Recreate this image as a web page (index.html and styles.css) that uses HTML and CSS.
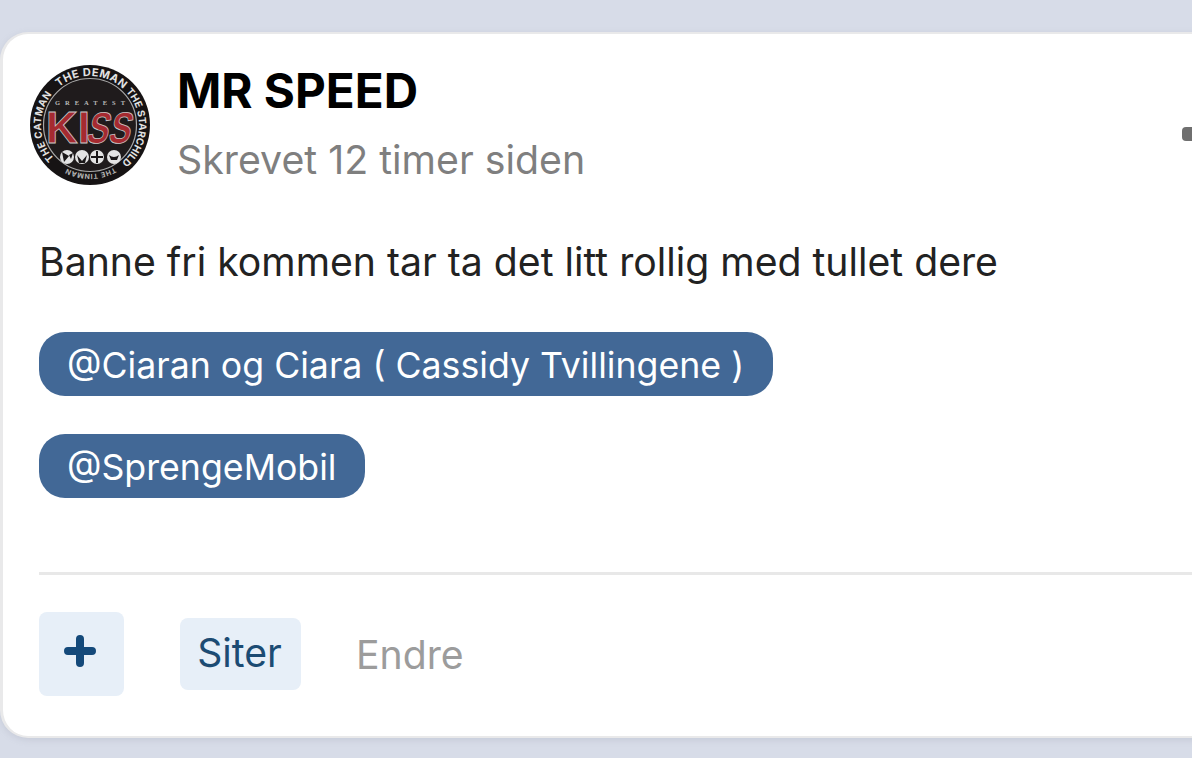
FILE: index.html
```html
<!DOCTYPE html>
<html lang="en">
<head>
    <meta charset="UTF-8">
    <meta name="viewport" content="width=device-width, initial-scale=1.0">
    <title>MR SPEED</title>
    <link rel="stylesheet" href="styles.css">
</head>
<body>
    <div class="post-card">
        <div class="post-header">
            <svg class="avatar" viewBox="0 0 122 122" aria-label="profile picture">
                <defs>
                    <path id="ring" d="M61 110A49 49 0 1 1 61 12A49 49 0 1 1 61 110"/>
                </defs>
                <circle cx="61" cy="61" r="60" fill="#161314"/>
                <circle cx="61" cy="61" r="46.5" fill="#1f1b1c" stroke="#a8a8a8" stroke-width="1.2"/>
                <text class="ring-text ring-left"><textPath href="#ring" startOffset="13%">THE CATMAN</textPath></text>
                <text class="ring-text"><textPath href="#ring" startOffset="39%">THE DEMAN</textPath></text>
                <text class="ring-text ring-right"><textPath href="#ring" startOffset="63%">THE STARCHILD</textPath></text>
                <g transform="rotate(-30 61 61)">
                    <text class="ring-text ring-low"><textPath href="#ring" startOffset="0%">THE TINMAN</textPath></text>
                </g>
                <text class="badge-small" x="61" y="41" text-anchor="middle" textLength="70">GREATEST</text>
                <text class="badge-logo" x="17" y="79">KI</text>
                <g transform="translate(56 79) skewX(-14)">
                    <text class="badge-logo" textLength="44" lengthAdjust="spacingAndGlyphs">SS</text>
                </g>
                <g fill="#e4e4e4">
                    <circle cx="38" cy="93" r="7"/>
                    <circle cx="53" cy="93" r="7"/>
                    <circle cx="68" cy="93" r="7"/>
                    <circle cx="85" cy="93" r="7"/>
                </g>
                <g fill="#1a1718">
                    <path d="M33 88l7 4-5 6zM40 91l4-2-2 6z"/>
                    <path d="M48 91l5 6 5-6-2 8h-6z"/>
                    <path d="M67 87h2v12h-2zM62 92h12v2h-12z"/>
                    <path d="M80 91q5 4 10 0l-2 5h-6z"/>
                </g>
            </svg>
            <div class="author">
                <h1 class="author-name">MR SPEED</h1>
                <div class="post-time">Skrevet 12 timer siden</div>
            </div>
            <div class="menu-dot"></div>
        </div>

        <p class="post-text">Banne fri kommen tar ta det litt rollig med tullet dere</p>

        <div class="mentions">
            <span class="mention">@Ciaran og Ciara ( Cassidy Tvillingene )</span>
            <span class="mention">@SprengeMobil</span>
        </div>

        <div class="post-actions">
            <button class="btn-plus" aria-label="Add">
                <svg viewBox="0 0 32 32" width="32" height="32">
                    <path d="M16 4v24M4 16h24" fill="none" stroke="#14497a" stroke-width="8" stroke-linecap="round"/>
                </svg>
            </button>
            <button class="btn-quote">Siter</button>
            <button class="btn-edit">Endre</button>
        </div>
    </div>
</body>
</html>
```

FILE: styles.css
```css
* {
    margin: 0;
    padding: 0;
    box-sizing: border-box;
    font-family: Inter, "Liberation Sans", sans-serif;
}

html, body {
    height: 100%;
    overflow: hidden;
}

body {
    background-color: #d7dce8;
    padding-top: 32px;
}

.post-card {
    width: 1242px;
    height: 706px;
    background-color: #ffffff;
    border: 2px solid #e9e9ea;
    border-left-width: 3px;
    border-radius: 28px;
    padding: 30px 40px 0 36px;
    box-shadow: 0 2px 6px rgba(150, 155, 170, 0.25);
}

.post-header {
    display: flex;
    align-items: flex-start;
    margin-left: -10px;
}

.avatar {
    width: 122px;
    height: 122px;
    flex-shrink: 0;
}

.ring-text {
    font-family: "Liberation Serif", serif;
    font-size: 11px;
    font-weight: 700;
    letter-spacing: 0.5px;
    fill: #e2e2e2;
}

.ring-left {
    font-size: 10px;
    letter-spacing: 0.3px;
}

.ring-right {
    font-size: 10px;
    letter-spacing: 0;
}

.ring-low {
    font-size: 7px;
    fill: #b5b5b5;
}

.badge-small {
    font-family: "Liberation Serif", serif;
    font-size: 6.5px;
    font-weight: 700;
    fill: #b9b9b9;
}

.badge-logo {
    font-family: "Liberation Sans", sans-serif;
    font-size: 44px;
    font-weight: 700;
    fill: #a52a30;
    stroke: #c9c9c9;
    stroke-width: 0.8px;
}

.author {
    margin-left: 26px;
}

.author-name {
    font-size: 47.6px;
    font-weight: 700;
    line-height: 54px;
    color: #000000;
}

.post-time {
    margin-top: 20px;
    font-size: 39.3px;
    line-height: 44px;
    color: #7f7f7f;
}

.menu-dot {
    width: 18px;
    height: 14px;
    margin-left: auto;
    margin-top: 63px;
    background-color: #6f6f6f;
    border-radius: 4px;
}

.post-text {
    margin-top: 53px;
    font-size: 39.2px;
    line-height: 46px;
    color: #222222;
}

.mentions {
    display: flex;
    flex-direction: column;
    align-items: flex-start;
    gap: 38px;
    margin-top: 47px;
}

.mention {
    padding: 0 29px 0 28px;
    height: 64px;
    line-height: 67px;
    font-size: 35.7px;
    color: #ffffff;
    background-color: #426896;
    border-radius: 26px;
}

.post-actions {
    display: flex;
    align-items: flex-start;
    margin-top: 74px;
    padding-top: 37px;
    border-top: 3px solid #e8e8e8;
}

.post-actions button {
    border: none;
    background: none;
    font-size: 39.2px;
}

.btn-plus {
    display: flex;
    align-items: center;
    justify-content: center;
    width: 85px;
    height: 84px;
    padding-bottom: 6px;
    padding-right: 3px;
    background-color: #e7eff8 !important;
    border-radius: 8px;
}

.btn-quote {
    width: 121px;
    height: 72px;
    margin-left: 56px;
    margin-top: 6px;
    padding-bottom: 4px;
    padding-right: 2px;
    color: #1c4b73;
    background-color: #e7eff8 !important;
    border-radius: 8px;
}

.btn-edit {
    margin-left: 55px;
    margin-top: 20px;
    line-height: 46px;
    color: #9c9c9c;
}
```
